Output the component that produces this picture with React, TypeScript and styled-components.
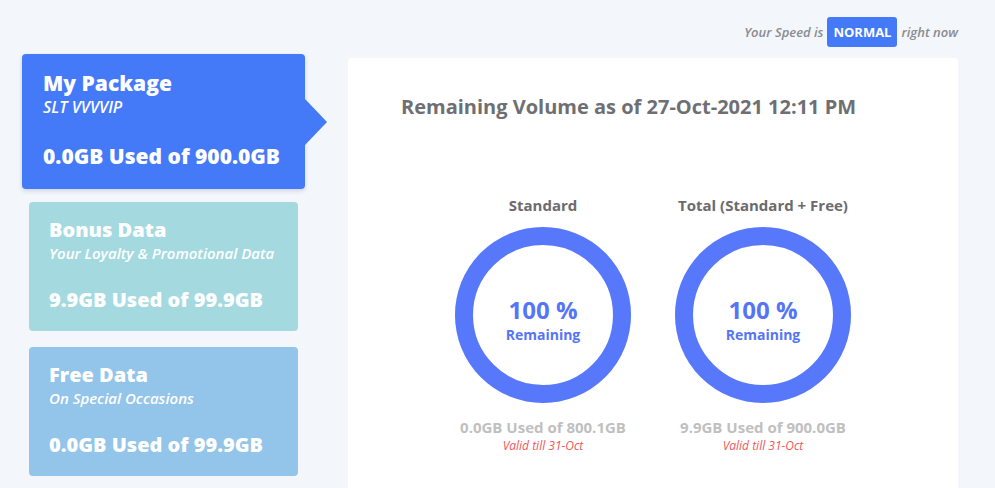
import React from 'react';
import styled, { createGlobalStyle } from 'styled-components';

const GlobalStyle = createGlobalStyle`
  body {
    margin: 0;
    padding: 0;
    background-color: #f3f6fb;
    font-family: 'Open Sans', 'Liberation Sans', sans-serif;
  }
`;

const Page = styled.div`
    padding: 17px 37px 0 22px;
    height: 488px;
    box-sizing: border-box;
    overflow: hidden;
`;

const SpeedBar = styled.div`
    display: flex;
    justify-content: flex-end;
    align-items: center;
    gap: 4px;
    height: 30px;
    color: #8b8b90;
    font-size: 13px;
    font-style: italic;
    font-weight: 600;
`;

const SpeedBadge = styled.span`
    display: inline-flex;
    align-items: center;
    justify-content: center;
    width: 70px;
    height: 30px;
    background-color: #4479f8;
    color: #ffffff;
    border-radius: 3px;
    font-style: normal;
    font-weight: 700;
    font-size: 13px;
`;

const Main = styled.div`
    display: flex;
    align-items: flex-start;
    gap: 43px;
    margin-top: 7px;
`;

const Side = styled.div`
    display: flex;
    flex-direction: column;
    width: 283px;
    flex-shrink: 0;
`;

const PackageCard = styled.div`
    position: relative;
    background-color: #4479f8;
    color: #ffffff;
    border-radius: 4px;
    padding: 15px 21px 0;
    height: 135px;
    box-sizing: border-box;
    box-shadow: 0 2px 4px rgba(40, 60, 120, 0.18);

    &::after {
        content: '';
        position: absolute;
        right: -22px;
        top: 45px;
        border-top: 23px solid transparent;
        border-bottom: 23px solid transparent;
        border-left: 22px solid #4479f8;
    }
`;

const DataCard = styled.div<{ $bg: string; $gap: number }>`
    background-color: ${props => props.$bg};
    color: #ffffff;
    border-radius: 4px;
    margin: ${props => props.$gap}px 7px 0;
    height: 129px;
    padding: 14px 20px 0;
    box-sizing: border-box;
`;

const CardTitle = styled.div<{ $size: number }>`
    font-size: ${props => props.$size}px;
    font-weight: 800;
    line-height: 28px;
`;

const CardSub = styled.div<{ $size: number }>`
    font-size: ${props => props.$size}px;
    font-style: italic;
    font-weight: 600;
    line-height: ${props => props.$size + 4}px;
`;

const CardValue = styled.div<{ $size: number; $gap: number }>`
    font-size: ${props => props.$size}px;
    font-weight: 800;
    line-height: 28px;
    margin-top: ${props => props.$gap}px;
`;

const Panel = styled.div`
    flex: 1;
    background-color: #ffffff;
    border-radius: 4px;
    margin-top: 4px;
    height: 440px;
    padding: 35px 53px 0;
    box-sizing: border-box;
`;

const PanelTitle = styled.h2`
    margin: 0;
    font-size: 20px;
    font-weight: 700;
    line-height: 27px;
    color: #6f6f73;
`;

const Charts = styled.div`
    display: flex;
    justify-content: center;
    margin-top: 75px;
`;

const ChartCol = styled.div`
    width: 220px;
    display: flex;
    flex-direction: column;
    align-items: center;
`;

const ChartLabel = styled.div`
    font-size: 15px;
    font-weight: 700;
    line-height: 20px;
    color: #6b6b6d;
`;

const Donut = styled.div`
    position: relative;
    width: 176px;
    height: 176px;
    margin-top: 12px;
    padding-top: 69px;
    box-sizing: border-box;
    display: flex;
    flex-direction: column;
    align-items: center;
    color: #5575f6;
`;

const Ring = styled.svg`
    position: absolute;
    inset: 0;
`;

const Percent = styled.div`
    position: relative;
    font-size: 24px;
    font-weight: 700;
    line-height: 28px;
`;

const RemainingText = styled.div`
    position: relative;
    margin-top: 2px;
    font-size: 14px;
    font-weight: 700;
    line-height: 18px;
`;

const UsedText = styled.div`
    margin-top: 14px;
    font-size: 15px;
    font-weight: 700;
    line-height: 20px;
    color: #bfbfc1;
`;

const ValidText = styled.div`
    margin-top: 1px;
    font-size: 12px;
    font-style: italic;
    line-height: 16px;
    color: #f0565b;
`;

const DonutChart: React.FC<{ percent: number }> = ({ percent }) => {
    const r = 79;
    const c = 2 * Math.PI * r;
    return (
        <Donut>
            <Ring viewBox="0 0 176 176">
                <circle cx="88" cy="88" r={r} fill="none" stroke="#e6ebfb" strokeWidth="18" />
                <circle
                    cx="88"
                    cy="88"
                    r={r}
                    fill="none"
                    stroke="#5878fc"
                    strokeWidth="18"
                    strokeDasharray={`${(c * percent) / 100} ${c}`}
                    transform="rotate(-90 88 88)"
                />
            </Ring>
            <Percent>{percent} %</Percent>
            <RemainingText>Remaining</RemainingText>
        </Donut>
    );
};

const charts = [
    { label: 'Standard', used: '0.0GB Used of 800.1GB', percent: 100 },
    { label: 'Total (Standard + Free)', used: '9.9GB Used of 900.0GB', percent: 100 },
];

const App: React.FC = () => {
    return (
        <>
            <GlobalStyle />
            <Page>
                <SpeedBar>
                    Your Speed is <SpeedBadge>NORMAL</SpeedBadge> right now
                </SpeedBar>
                <Main>
                    <Side>
                        <PackageCard>
                            <CardTitle $size={21}>My Package</CardTitle>
                            <CardSub $size={16}>SLT VVVVIP</CardSub>
                            <CardValue $size={21} $gap={25}>0.0GB Used of 900.0GB</CardValue>
                        </PackageCard>
                        <DataCard $bg="#a4dadf" $gap={13}>
                            <CardTitle $size={20}>Bonus Data</CardTitle>
                            <CardSub $size={15}>Your Loyalty &amp; Promotional Data</CardSub>
                            <CardValue $size={20} $gap={23}>9.9GB Used of 99.9GB</CardValue>
                        </DataCard>
                        <DataCard $bg="#93c4e9" $gap={16}>
                            <CardTitle $size={20}>Free Data</CardTitle>
                            <CardSub $size={15}>On Special Occasions</CardSub>
                            <CardValue $size={20} $gap={23}>0.0GB Used of 99.9GB</CardValue>
                        </DataCard>
                    </Side>
                    <Panel>
                        <PanelTitle>Remaining Volume as of 27-Oct-2021 12:11 PM</PanelTitle>
                        <Charts>
                            {charts.map(chart => (
                                <ChartCol key={chart.label}>
                                    <ChartLabel>{chart.label}</ChartLabel>
                                    <DonutChart percent={chart.percent} />
                                    <UsedText>{chart.used}</UsedText>
                                    <ValidText>Valid till 31-Oct</ValidText>
                                </ChartCol>
                            ))}
                        </Charts>
                    </Panel>
                </Main>
            </Page>
        </>
    );
};

export default App;
